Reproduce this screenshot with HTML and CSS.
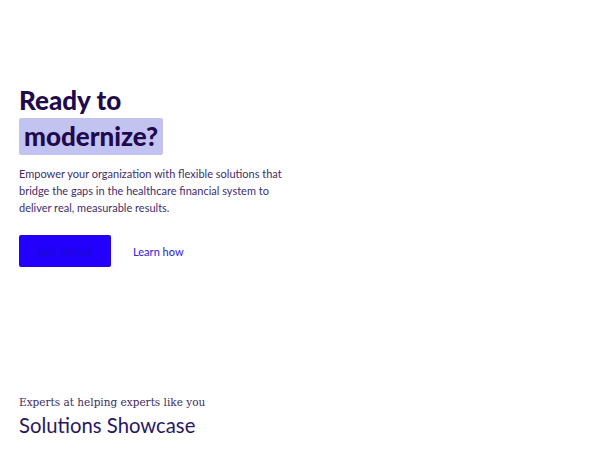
FILE: index.html
```html
<!DOCTYPE html>
<html lang="en">
<head>
<meta charset="utf-8">
<link rel="stylesheet" href="styles.css">
</head>
<body>
<main class="page">
  <section class="hero">
    <h1 class="hero-title">Ready to<br><span class="highlight">modernize?</span></h1>
    <p class="hero-text">Empower your organization with flexible solutions that bridge the gaps in the healthcare financial system to deliver real, measurable results.</p>
    <div class="actions">
      <a class="btn-primary" href="#">Get started</a>
      <a class="btn-link" href="#">Learn how</a>
    </div>
  </section>
  <section class="showcase">
    <p class="eyebrow">Experts at helping experts like you</p>
    <h2 class="showcase-title">Solutions Showcase</h2>
  </section>
</main>
</body>
</html>
```
FILE: styles.css
```css
* { box-sizing: border-box; }
html, body { margin: 0; padding: 0; background: #ffffff; }
body { font-family: Lato, "Open Sans", sans-serif; }
.page { padding: 82px 19px 0 19px; }
.hero { width: 270px; }
.hero-title {
  margin: 0;
  font-size: 26px;
  line-height: 36px;
  font-weight: 900;
  color: #1e0a4c;
}
.highlight {
  display: inline-block;
  background: #c3c3f2;
  border-radius: 2px;
  padding: 0 5px;
  line-height: 36px;
  height: 37px;
}
.hero-text {
  margin: 10px 0 0 0;
  font-size: 11px;
  line-height: 17px;
  color: #3f2d6b;
}
.actions {
  margin-top: 19px;
  display: flex;
  align-items: center;
  gap: 22px;
}
.btn-primary {
  display: flex;
  align-items: center;
  justify-content: center;
  width: 92px;
  height: 32px;
  background: #2200fb;
  color: #1a0ad6;
  border-radius: 2px;
  font-size: 11px;
  text-decoration: none;
}
.btn-link {
  color: #3a2ed0;
  font-size: 11px;
  font-weight: 500;
  text-decoration: none;
}
.showcase { margin-top: 127px; }
.eyebrow {
  margin: 0;
  font-family: "DejaVu Serif", serif;
  font-size: 10.5px;
  line-height: 16px;
  color: #3d2b5c;
}
.showcase-title {
  margin: 2px 0 0 0;
  font-size: 20.3px;
  line-height: 26px;
  font-weight: 400;
  color: #2a1760;
}
```
